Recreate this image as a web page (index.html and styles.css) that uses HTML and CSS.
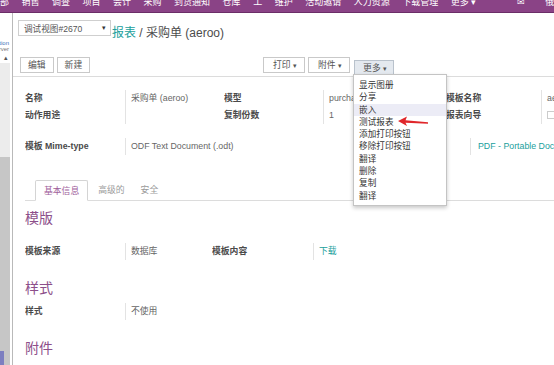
FILE: index.html
```html
<!DOCTYPE html>
<html lang="zh-CN">
<head>
<meta charset="utf-8">
<title>采购单 (aeroo)</title>
<link rel="stylesheet" href="styles.css">
</head>
<body>
<header class="topbar">
  <nav class="topnav">
    <span>部</span>
    <span>销售</span>
    <span>调查</span>
    <span>项目</span>
    <span>会计</span>
    <span>采购</span>
    <span>到货通知</span>
    <span>仓库</span>
    <span>工</span>
    <span>维护</span>
    <span>活动邀请</span>
    <span>人力资源</span>
    <span>下载管理</span>
    <span>更多 ▾</span>
    <span class="nav-icons">✉ 俄</span>
  </nav>
</header>
<div class="main">
  <aside class="sidebar">
    <div class="sb-top"><div class="sb-text"><span class="sb-blue">Application</span><span>Server</span></div></div>
    <div class="sb-arrow">▴</div>
    <div class="sb-track"></div>
    <div class="sb-thumb"><div class="sb-badge"></div></div>
  </aside>
  <div class="content">
    <div class="cp">
      <div class="cp-row1">
        <div class="select">调试视图#2670<span class="caret">▾</span></div>
        <div class="breadcrumb"><span class="link">报表</span> / 采购单 (aeroo)</div>
      </div>
      <div class="cp-row2">
        <div class="cp-left">
          <button class="btn">编辑</button>
          <button class="btn">新建</button>
        </div>
        <div class="cp-right">
          <button class="btn">打印 <span class="dcaret">▾</span></button>
          <button class="btn">附件 <span class="dcaret">▾</span></button>
          <div class="more-wrap">
            <button class="btn active">更多 <span class="dcaret">▾</span></button>
            <ul class="dropdown">
              <li>显示图册</li>
              <li>分享</li>
              <li class="hover">嵌入</li>
              <li>测试报表</li>
              <li>添加打印按钮</li>
              <li>移除打印按钮</li>
              <li>翻译</li>
              <li>删除</li>
              <li>复制</li>
              <li>翻译</li>
            </ul>
            <svg class="red-arrow" width="32" height="12" viewBox="0 0 32 12">
              <polygon points="0,5 9,0.5 7.5,4.2 30,6.2 30,7.8 7.5,6.8 9,10" fill="#e0262a"/>
            </svg>
          </div>
        </div>
      </div>
    </div>
    <div class="sheet">
      <div class="grid g-top">
        <div class="lbl">名称</div>
        <div class="val">采购单 (aeroo)</div>
        <div class="lbl">模型</div>
        <div class="val">purchase.order</div>
        <div class="lbl">模板名称</div>
        <div class="val nowrap">aeroo_purchase</div>
        <div class="lbl">动作用途</div>
        <div class="val"></div>
        <div class="lbl">复制份数</div>
        <div class="val">1</div>
        <div class="lbl">报表向导</div>
        <div class="val"><span class="checkbox"></span></div>
      </div>
      <div class="grid g-mime">
        <div class="lbl">模板 Mime-type</div>
        <div class="val">ODF Text Document (.odt)</div>
        <div class="lbl">输出类型</div>
        <div class="val link nowrap">PDF - Portable Document (.pdf)</div>
      </div>
      <div class="tabs">
        <div class="tab active">基本信息</div>
        <div class="tab">高级的</div>
        <div class="tab">安全</div>
      </div>
      <h2 class="sep">模版</h2>
      <div class="grid g-src">
        <div class="lbl">模板来源</div>
        <div class="val">数据库</div>
        <div class="lbl">模板内容</div>
        <div class="val link">下载</div>
      </div>
      <h2 class="sep">样式</h2>
      <div class="grid g-style">
        <div class="lbl">样式</div>
        <div class="val">不使用</div>
      </div>
      <h2 class="sep">附件</h2>
    </div>
  </div>
</div>
</body>
</html>
```

FILE: styles.css
```css
* { box-sizing: border-box; margin: 0; padding: 0; }
html, body { width: 554px; height: 365px; overflow: hidden; }
body {
  font-family: "Liberation Sans", "Noto Sans CJK SC", sans-serif;
  background: #fff;
  color: #666;
}

/* top purple bar */
.topbar {
  height: 13px;
  background: #8a4386;
  border-bottom: 1px solid #6b2d67;
  overflow: hidden;
}
.topnav {
  display: flex;
  gap: 12.5px;
  height: 20px;
  margin-top: -9px;
  align-items: center;
  font-size: 9px;
  color: #fff;
  white-space: nowrap;
}
.nav-icons { margin-left: 28px; letter-spacing: 9px; }

/* layout */
.main { display: flex; height: 352px; }
.sidebar {
  width: 13px;
  flex: none;
  border-right: 1px solid #b9b9b9;
  display: flex;
  flex-direction: column;
  overflow: hidden;
}
.sb-top { height: 40px; display: flex; align-items: flex-end; justify-content: flex-end; overflow: hidden; }
.sb-text {
  display: flex; flex-direction: column; align-items: flex-end;
  font-size: 6px; line-height: 6px; color: #777; white-space: nowrap;
  margin-bottom: 1px; margin-right: 3px;
}
.sb-blue { color: #3b6fb5; }
.sb-arrow { height: 10px; font-size: 7px; line-height: 10px; color: #555; padding-left: 4px; }
.sb-track { height: 94px; background: #ececec; margin-right: 2px; }
.sb-thumb { flex: 1; background: #c6c6c6; margin-right: 2px; display: flex; flex-direction: column; justify-content: flex-end; }
.sb-badge { width: 4px; height: 14px; background: #7d7fc0; }

.content { flex: 1; min-width: 0; }

/* control panel */
.cp {
  height: 64px;
  border-bottom: 1px solid #dcdcdc;
  padding: 6px 0 0 5px;
}
.cp-row1 { display: flex; align-items: flex-end; height: 17px; }
.select {
  width: 93px; height: 16px;
  border: 1px solid #cfcfcf;
  font-size: 8.6px; color: #555;
  display: flex; align-items: center; justify-content: space-between;
  padding: 0 4px 0 5px;
}
.caret { font-size: 7px; color: #333; }
.breadcrumb { font-size: 12px; color: #4c4c4c; margin-left: 1px; line-height: 14px; margin-bottom: -4px; }
.link { color: #21a09c; }

.cp-row2 { display: flex; margin-top: 21px; padding-left: 2px; }
.cp-left { display: flex; gap: 3px; width: 243px; }
.cp-right { display: flex; gap: 3px; }
.btn {
  height: 16px;
  border: 1px solid #c9c9c9;
  background: #fff;
  font-family: inherit;
  font-size: 8.8px;
  color: #555;
  padding: 0 7px;
  line-height: 14px;
}
.cp-right .btn { padding: 0 7px 0 9px; }
.cp-right .more-wrap .btn { padding: 0 6px 0 8px; }
.more-wrap { margin-left: 1px; }
.dcaret { font-size: 7px; }
.btn.active { background: #e4e9ef; border-color: #b9c2cc; }

.more-wrap { position: relative; }
.dropdown {
  position: absolute;
  left: -1px; top: 17px;
  width: 94px;
  background: #fff;
  border: 1px solid #c4c4c4;
  box-shadow: 0 2px 4px rgba(0,0,0,.22);
  list-style: none;
  padding: 4px 0 3px;
  z-index: 5;
}
.dropdown li {
  font-size: 8.6px;
  line-height: 12.3px;
  height: 12.3px;
  color: #333;
  padding-left: 5px;
  white-space: nowrap;
}
.dropdown li.hover { background: #ececf6; }
.red-arrow { position: absolute; left: 44px; top: 59px; z-index: 6; }

/* sheet */
.sheet { padding: 13px 0 0 12px; }
.grid { display: grid; font-size: 8.8px; }
.grid > div { height: 17px; line-height: 17px; white-space: nowrap; overflow: hidden; }
.lbl { font-weight: bold; color: #4a4a4a; }
.val { border-left: 1px solid #e3e3e3; padding-left: 5px; color: #666; }
.val.link { color: #21a09c; }
.g-top { grid-template-columns: 100px 99px 99px 123px 95px 1fr; }
.g-mime { grid-template-columns: 100px 245px 100px 1fr; margin-top: 14px; }
.g-mime > .val.link { padding-left: 7px; }
.g-src { grid-template-columns: 100px 87px 101px 1fr; margin-top: 14px; }
.g-style { grid-template-columns: 100px 1fr; margin-top: 4px; }
.checkbox { display: inline-block; width: 8px; height: 8px; border: 1px solid #ccc; vertical-align: middle; margin-top: -2px; }

.tabs {
  display: flex;
  margin-top: 25px;
  height: 21px;
  border-bottom: 1px solid #dcdcdc;
  padding-left: 10px;
  font-size: 8.8px;
}
.tab { line-height: 20px; padding: 0 6px; margin-left: 4px; color: #9a9a9a; }
.tab.active {
  margin-left: 0;
  padding: 0 8px;
  color: #a0609b;
  border: 1px solid #d4d4d4;
  border-bottom-color: #fff;
  border-radius: 2px 2px 0 0;
  height: 21px;
  background: #fff;
}
.sep {
  font-size: 14px;
  font-weight: normal;
  color: #8d4f8a;
  height: 22px;
  line-height: 22px;
  margin-top: 6px;
}
.g-src + .sep { margin-top: 17px; }
.g-style + .sep { margin-top: 17px; }
.nowrap { white-space: nowrap; }
```
